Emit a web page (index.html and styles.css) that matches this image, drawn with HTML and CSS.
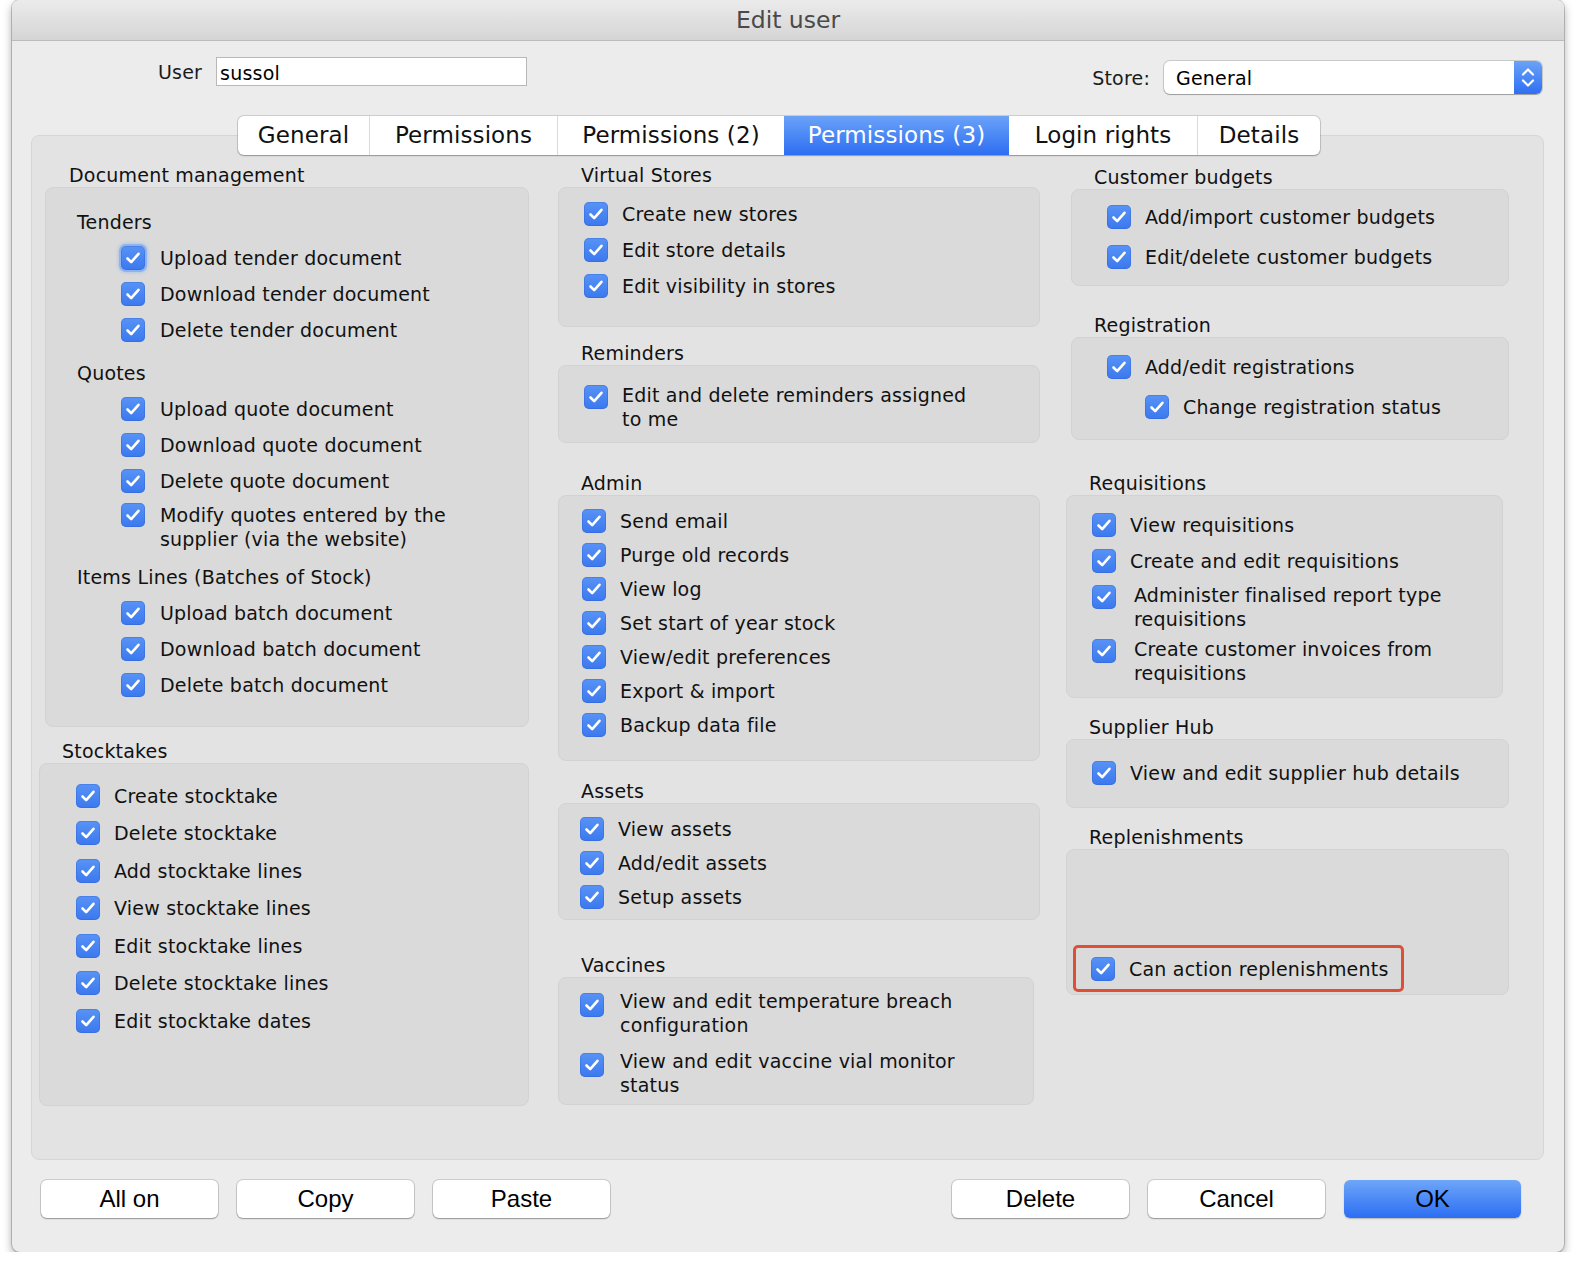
FILE: index.html
```html
<!DOCTYPE html>
<html>
<head>
<meta charset="utf-8">
<title>Edit user</title>
<link rel="stylesheet" href="styles.css">
</head>
<body>
<div class="window">
  <div class="titlebar">Edit user</div>
  <div class="toprow">
    <div class="field">
      <span class="flabel">User</span>
      <div class="input">sussol</div>
    </div>
    <div class="field store">
      <span class="flabel">Store:</span>
      <div class="select">
        <span class="seltext">General</span>
        <span class="selbtn">
          <svg width="28" height="33" viewBox="0 0 28 33"><path d="M9 13.5 L14 8.5 L19 13.5 M9 19.5 L14 24.5 L19 19.5" fill="none" stroke="#fff" stroke-width="2.2" stroke-linecap="round" stroke-linejoin="round"/></svg>
        </span>
      </div>
    </div>
  </div>

  <div class="panel">
    <div class="tabs">
      <div class="tab t1">General</div>
      <div class="tab t2">Permissions</div>
      <div class="tab t3">Permissions (2)</div>
      <div class="tab t4 active">Permissions (3)</div>
      <div class="tab t5">Login rights</div>
      <div class="tab t6">Details</div>
    </div>

    <div class="cols">
      <!-- Column 1 -->
      <div class="col">
        <div class="group g-doc">
          <div class="glabel">Document management</div>
          <div class="gbox">
            <div class="sub">Tenders</div>
            <div class="row"><span class="cb focus"><svg viewBox="0 0 24 24"><path d="M6.5 12.5 L10.2 16.2 L17.5 7.8"/></svg></span><span class="txt">Upload tender document</span></div>
            <div class="row"><span class="cb"><svg viewBox="0 0 24 24"><path d="M6.5 12.5 L10.2 16.2 L17.5 7.8"/></svg></span><span class="txt">Download tender document</span></div>
            <div class="row"><span class="cb"><svg viewBox="0 0 24 24"><path d="M6.5 12.5 L10.2 16.2 L17.5 7.8"/></svg></span><span class="txt">Delete tender document</span></div>
            <div class="sub sub-q">Quotes</div>
            <div class="row"><span class="cb"><svg viewBox="0 0 24 24"><path d="M6.5 12.5 L10.2 16.2 L17.5 7.8"/></svg></span><span class="txt">Upload quote document</span></div>
            <div class="row"><span class="cb"><svg viewBox="0 0 24 24"><path d="M6.5 12.5 L10.2 16.2 L17.5 7.8"/></svg></span><span class="txt">Download quote document</span></div>
            <div class="row"><span class="cb"><svg viewBox="0 0 24 24"><path d="M6.5 12.5 L10.2 16.2 L17.5 7.8"/></svg></span><span class="txt">Delete quote document</span></div>
            <div class="row multi doc-multi"><span class="cb"><svg viewBox="0 0 24 24"><path d="M6.5 12.5 L10.2 16.2 L17.5 7.8"/></svg></span><span class="txt">Modify quotes entered by the<br>supplier (via the website)</span></div>
            <div class="sub sub-i">Items Lines (Batches of Stock)</div>
            <div class="row"><span class="cb"><svg viewBox="0 0 24 24"><path d="M6.5 12.5 L10.2 16.2 L17.5 7.8"/></svg></span><span class="txt">Upload batch document</span></div>
            <div class="row"><span class="cb"><svg viewBox="0 0 24 24"><path d="M6.5 12.5 L10.2 16.2 L17.5 7.8"/></svg></span><span class="txt">Download batch document</span></div>
            <div class="row"><span class="cb"><svg viewBox="0 0 24 24"><path d="M6.5 12.5 L10.2 16.2 L17.5 7.8"/></svg></span><span class="txt">Delete batch document</span></div>
          </div>
        </div>

        <div class="group g-stock">
          <div class="glabel">Stocktakes</div>
          <div class="gbox">
            <div class="row"><span class="cb"><svg viewBox="0 0 24 24"><path d="M6.5 12.5 L10.2 16.2 L17.5 7.8"/></svg></span><span class="txt">Create stocktake</span></div>
            <div class="row"><span class="cb"><svg viewBox="0 0 24 24"><path d="M6.5 12.5 L10.2 16.2 L17.5 7.8"/></svg></span><span class="txt">Delete stocktake</span></div>
            <div class="row"><span class="cb"><svg viewBox="0 0 24 24"><path d="M6.5 12.5 L10.2 16.2 L17.5 7.8"/></svg></span><span class="txt">Add stocktake lines</span></div>
            <div class="row"><span class="cb"><svg viewBox="0 0 24 24"><path d="M6.5 12.5 L10.2 16.2 L17.5 7.8"/></svg></span><span class="txt">View stocktake lines</span></div>
            <div class="row"><span class="cb"><svg viewBox="0 0 24 24"><path d="M6.5 12.5 L10.2 16.2 L17.5 7.8"/></svg></span><span class="txt">Edit stocktake lines</span></div>
            <div class="row"><span class="cb"><svg viewBox="0 0 24 24"><path d="M6.5 12.5 L10.2 16.2 L17.5 7.8"/></svg></span><span class="txt">Delete stocktake lines</span></div>
            <div class="row"><span class="cb"><svg viewBox="0 0 24 24"><path d="M6.5 12.5 L10.2 16.2 L17.5 7.8"/></svg></span><span class="txt">Edit stocktake dates</span></div>
          </div>
        </div>
      </div>

      <!-- Column 2 -->
      <div class="col col-mid">
        <div class="group g-virt">
          <div class="glabel">Virtual Stores</div>
          <div class="gbox">
            <div class="row"><span class="cb"><svg viewBox="0 0 24 24"><path d="M6.5 12.5 L10.2 16.2 L17.5 7.8"/></svg></span><span class="txt">Create new stores</span></div>
            <div class="row"><span class="cb"><svg viewBox="0 0 24 24"><path d="M6.5 12.5 L10.2 16.2 L17.5 7.8"/></svg></span><span class="txt">Edit store details</span></div>
            <div class="row"><span class="cb"><svg viewBox="0 0 24 24"><path d="M6.5 12.5 L10.2 16.2 L17.5 7.8"/></svg></span><span class="txt">Edit visibility in stores</span></div>
          </div>
        </div>

        <div class="group g-rem">
          <div class="glabel">Reminders</div>
          <div class="gbox">
            <div class="row multi"><span class="cb"><svg viewBox="0 0 24 24"><path d="M6.5 12.5 L10.2 16.2 L17.5 7.8"/></svg></span><span class="txt">Edit and delete reminders assigned<br>to me</span></div>
          </div>
        </div>

        <div class="group g-admin">
          <div class="glabel">Admin</div>
          <div class="gbox">
            <div class="row"><span class="cb"><svg viewBox="0 0 24 24"><path d="M6.5 12.5 L10.2 16.2 L17.5 7.8"/></svg></span><span class="txt">Send email</span></div>
            <div class="row"><span class="cb"><svg viewBox="0 0 24 24"><path d="M6.5 12.5 L10.2 16.2 L17.5 7.8"/></svg></span><span class="txt">Purge old records</span></div>
            <div class="row"><span class="cb"><svg viewBox="0 0 24 24"><path d="M6.5 12.5 L10.2 16.2 L17.5 7.8"/></svg></span><span class="txt">View log</span></div>
            <div class="row"><span class="cb"><svg viewBox="0 0 24 24"><path d="M6.5 12.5 L10.2 16.2 L17.5 7.8"/></svg></span><span class="txt">Set start of year stock</span></div>
            <div class="row"><span class="cb"><svg viewBox="0 0 24 24"><path d="M6.5 12.5 L10.2 16.2 L17.5 7.8"/></svg></span><span class="txt">View/edit preferences</span></div>
            <div class="row"><span class="cb"><svg viewBox="0 0 24 24"><path d="M6.5 12.5 L10.2 16.2 L17.5 7.8"/></svg></span><span class="txt">Export &amp; import</span></div>
            <div class="row"><span class="cb"><svg viewBox="0 0 24 24"><path d="M6.5 12.5 L10.2 16.2 L17.5 7.8"/></svg></span><span class="txt">Backup data file</span></div>
          </div>
        </div>

        <div class="group g-assets">
          <div class="glabel">Assets</div>
          <div class="gbox">
            <div class="row"><span class="cb"><svg viewBox="0 0 24 24"><path d="M6.5 12.5 L10.2 16.2 L17.5 7.8"/></svg></span><span class="txt">View assets</span></div>
            <div class="row"><span class="cb"><svg viewBox="0 0 24 24"><path d="M6.5 12.5 L10.2 16.2 L17.5 7.8"/></svg></span><span class="txt">Add/edit assets</span></div>
            <div class="row"><span class="cb"><svg viewBox="0 0 24 24"><path d="M6.5 12.5 L10.2 16.2 L17.5 7.8"/></svg></span><span class="txt">Setup assets</span></div>
          </div>
        </div>

        <div class="group g-vacc">
          <div class="glabel">Vaccines</div>
          <div class="gbox">
            <div class="row multi"><span class="cb"><svg viewBox="0 0 24 24"><path d="M6.5 12.5 L10.2 16.2 L17.5 7.8"/></svg></span><span class="txt">View and edit temperature breach<br>configuration</span></div>
            <div class="row multi"><span class="cb"><svg viewBox="0 0 24 24"><path d="M6.5 12.5 L10.2 16.2 L17.5 7.8"/></svg></span><span class="txt">View and edit vaccine vial monitor<br>status</span></div>
          </div>
        </div>
      </div>

      <!-- Column 3 -->
      <div class="col col-right">
        <div class="group g-cust">
          <div class="glabel">Customer budgets</div>
          <div class="gbox">
            <div class="row"><span class="cb"><svg viewBox="0 0 24 24"><path d="M6.5 12.5 L10.2 16.2 L17.5 7.8"/></svg></span><span class="txt">Add/import customer budgets</span></div>
            <div class="row"><span class="cb"><svg viewBox="0 0 24 24"><path d="M6.5 12.5 L10.2 16.2 L17.5 7.8"/></svg></span><span class="txt">Edit/delete customer budgets</span></div>
          </div>
        </div>

        <div class="group g-reg">
          <div class="glabel">Registration</div>
          <div class="gbox">
            <div class="row"><span class="cb"><svg viewBox="0 0 24 24"><path d="M6.5 12.5 L10.2 16.2 L17.5 7.8"/></svg></span><span class="txt">Add/edit registrations</span></div>
            <div class="row indent"><span class="cb"><svg viewBox="0 0 24 24"><path d="M6.5 12.5 L10.2 16.2 L17.5 7.8"/></svg></span><span class="txt">Change registration status</span></div>
          </div>
        </div>

        <div class="group g-req">
          <div class="glabel">Requisitions</div>
          <div class="gbox">
            <div class="row"><span class="cb"><svg viewBox="0 0 24 24"><path d="M6.5 12.5 L10.2 16.2 L17.5 7.8"/></svg></span><span class="txt">View requisitions</span></div>
            <div class="row"><span class="cb"><svg viewBox="0 0 24 24"><path d="M6.5 12.5 L10.2 16.2 L17.5 7.8"/></svg></span><span class="txt">Create and edit requisitions</span></div>
            <div class="row multi req-a"><span class="cb"><svg viewBox="0 0 24 24"><path d="M6.5 12.5 L10.2 16.2 L17.5 7.8"/></svg></span><span class="txt">Administer finalised report type<br>requisitions</span></div>
            <div class="row multi req-b"><span class="cb"><svg viewBox="0 0 24 24"><path d="M6.5 12.5 L10.2 16.2 L17.5 7.8"/></svg></span><span class="txt">Create customer invoices from<br>requisitions</span></div>
          </div>
        </div>

        <div class="group g-sup">
          <div class="glabel">Supplier Hub</div>
          <div class="gbox">
            <div class="row"><span class="cb"><svg viewBox="0 0 24 24"><path d="M6.5 12.5 L10.2 16.2 L17.5 7.8"/></svg></span><span class="txt">View and edit supplier hub details</span></div>
          </div>
        </div>

        <div class="group g-rep">
          <div class="glabel">Replenishments</div>
          <div class="gbox">
            <div class="highlight">
              <div class="row"><span class="cb"><svg viewBox="0 0 24 24"><path d="M6.5 12.5 L10.2 16.2 L17.5 7.8"/></svg></span><span class="txt">Can action replenishments</span></div>
            </div>
          </div>
        </div>
      </div>
    </div>
  </div>

  <div class="buttons">
    <div class="btn">All on</div>
    <div class="btn">Copy</div>
    <div class="btn">Paste</div>
    <div class="spacer"></div>
    <div class="btn">Delete</div>
    <div class="btn">Cancel</div>
    <div class="btn primary">OK</div>
  </div>
</div>
</body>
</html>
```

FILE: styles.css
```css
html, body {
  margin: 0;
  padding: 0;
  background: #ffffff;
}

body {
  font-family: "DejaVu Sans", "Noto Sans", sans-serif;
  font-size: 19px;
  letter-spacing: 0.2px;
  color: #111;
}

.window {
  margin-left: 12px;
  width: 1552px;
  height: 1252px;
  box-sizing: border-box;
  background: #ececec;
  border-radius: 8px;
  box-shadow: 0 0 0 1px rgba(0,0,0,0.18), 0 4px 10px rgba(0,0,0,0.35);
  overflow: hidden;
}

.titlebar {
  height: 41px;
  box-sizing: border-box;
  border-bottom: 1px solid #bcbcbc;
  background: linear-gradient(#ebebeb, #d5d5d5);
  text-align: center;
  line-height: 41px;
  font-size: 23.5px;
  letter-spacing: 0;
  color: #4a4a4a;
}

.toprow {
  height: 94px;
  box-sizing: border-box;
  padding: 16px 22px 0 146px;
  display: flex;
  align-items: flex-start;
}

.field {
  display: flex;
  align-items: center;
}

.flabel {
  margin-right: 14px;
  color: #1b1b1b;
}

.input {
  width: 311px;
  height: 29px;
  box-sizing: border-box;
  background: #fff;
  border: 1px solid #b8b8b8;
  line-height: 27px;
  padding: 2px 0 0 3px;
  color: #000;
}

.field.store {
  margin-left: auto;
  margin-top: 4px;
}

.select {
  width: 378px;
  height: 33px;
  box-sizing: border-box;
  background: #fff;
  border-radius: 6px;
  box-shadow: 0 0 0 1px rgba(0,0,0,0.14), 0 1px 1px rgba(0,0,0,0.22);
  display: flex;
  align-items: center;
  overflow: hidden;
}

.seltext {
  flex: 1;
  padding-left: 12px;
  color: #000;
}

.selbtn {
  width: 28px;
  height: 33px;
  background: linear-gradient(#6aa3f8, #2e6ff3);
  display: flex;
}

.panel {
  margin: 0 20px 0 19px;
  height: 1025px;
  box-sizing: border-box;
  background: #e3e3e3;
  border: 1px solid #d6d6d6;
  border-radius: 8px;
}

.tabs {
  margin: -20px 0 0 206px;
  display: flex;
  width: max-content;
  height: 39px;
  background: #fff;
  border-radius: 6px;
  box-shadow: 0 0 0 1px rgba(0,0,0,0.13), 0 1px 1.5px rgba(0,0,0,0.25);
  overflow: hidden;
  position: relative;
}

.tab {
  font-size: 23px;
  letter-spacing: 0.1px;
  line-height: 39px;
  text-align: center;
  color: #111;
  border-left: 1px solid #dadada;
  box-sizing: border-box;
  white-space: nowrap;
}

.tab.t1 { width: 131px; border-left: none; }
.tab.t2 { width: 188px; }
.tab.t3 { width: 227px; }
.tab.t4 { width: 225px; }
.tab.t5 { width: 188px; }
.tab.t6 { width: 123px; }

.tab.active {
  background: linear-gradient(#6aa2f8, #2d6ef2);
  color: #fff;
  border-left: none;
}

.tab.active + .tab {
  border-left: none;
}

.cols {
  display: grid;
  grid-template-columns: 490px 511px 469px;
  padding-left: 7px;
  margin-top: 8px;
  align-items: start;
}

.col {
  display: flex;
  flex-direction: column;
}

.col.col-mid { padding-left: 29px; }
.col.col-right { padding-left: 26px; }

.glabel {
  height: 24px;
  line-height: 24px;
  padding-left: 23px;
  color: #111;
  white-space: nowrap;
}

.gbox {
  background: #dadada;
  border: 1px solid #d2d2d2;
  border-radius: 8px;
  box-sizing: border-box;
}

.row {
  display: flex;
  align-items: center;
  height: 36px;
  white-space: nowrap;
}

.row.multi {
  height: auto;
  align-items: flex-start;
}

.txt {
  line-height: 24px;
  color: #111;
}

.cb {
  flex: none;
  width: 24px;
  height: 24px;
  border-radius: 5px;
  background: linear-gradient(#5893f6, #3b78ee);
  box-shadow: inset 0 0 0 1px rgba(40,90,200,0.3);
  display: flex;
}

.cb svg {
  width: 24px;
  height: 24px;
}

.cb svg path {
  fill: none;
  stroke: #fff;
  stroke-width: 2.6;
  stroke-linecap: round;
  stroke-linejoin: round;
}

.cb.focus {
  box-shadow: inset 0 0 0 1px rgba(40,90,200,0.3), 0 0 0 2px rgba(110,160,245,0.55), 0 0 3px 3px rgba(110,160,245,0.35);
}

.sub {
  height: 36px;
  line-height: 36px;
  padding-left: 31px;
  color: #111;
}

/* Document management */
.g-doc { margin-left: 6px; width: 484px; }
.g-doc .glabel { padding-left: 24px; }
.g-doc .gbox { padding: 16px 0 23px; }
.g-doc .row { padding-left: 75px; }
.g-doc .row .txt { margin-left: 15px; }
.g-doc .sub-q { margin-top: 7px; }
.g-doc .sub-i { margin-top: 5px; }
.g-doc .doc-multi { padding-top: 4px; padding-bottom: 3px; }

/* Stocktakes */
.g-stock { margin-top: 12px; width: 490px; }
.g-stock .gbox { padding: 13px 0 65px; }
.g-stock .row { padding-left: 36px; height: 37.5px; }
.g-stock .row .txt { margin-left: 14px; }

/* Virtual Stores */
.g-virt .gbox { padding: 8px 0 22px; }
.g-virt .row { padding-left: 25px; }
.g-virt .row .txt { margin-left: 14px; }

/* Reminders */
.g-rem { margin-top: 14px; }
.g-rem .gbox { padding: 17px 0 11px; }
.g-rem .row { padding-left: 25px; }
.g-rem .row .cb { margin-top: 2px; }
.g-rem .row .txt { margin-left: 14px; }

/* Admin */
.g-admin { margin-top: 28px; }
.g-admin .gbox { padding: 8px 0 18px; }
.g-admin .row { padding-left: 23px; height: 34px; }
.g-admin .row .txt { margin-left: 14px; }

/* Assets */
.g-assets { margin-top: 18px; }
.g-assets .gbox { padding: 8px 0 5px; }
.g-assets .row { padding-left: 21px; height: 34px; }
.g-assets .row .txt { margin-left: 14px; }

/* Vaccines */
.g-vacc { margin-top: 33px; width: 476px; }
.g-vacc .gbox { padding: 11px 0 7px; display: flex; flex-direction: column; gap: 12px; }
.g-vacc .row { padding-left: 21px; }
.g-vacc .row .cb { margin-top: 4px; }
.g-vacc .row .txt { margin-left: 16px; }

/* Customer budgets */
.g-cust { margin-top: 2px; margin-left: 5px; width: 438px; }
.g-cust .gbox { padding: 7px 0 8px; }
.g-cust .row { padding-left: 35px; height: 40px; }
.g-cust .row .txt { margin-left: 14px; }

/* Registration */
.g-reg { margin-top: 27px; margin-left: 5px; width: 438px; }
.g-reg .gbox { padding: 9px 0 12px; }
.g-reg .row { padding-left: 35px; height: 40px; }
.g-reg .row.indent { padding-left: 73px; }
.g-reg .row .txt { margin-left: 14px; }

/* Requisitions */
.g-req { margin-top: 31px; width: 437px; }
.g-req .gbox { padding: 11px 0 12px; }
.g-req .row { padding-left: 25px; }
.g-req .row .txt { margin-left: 14px; }
.g-req .row.multi .txt { margin-left: 18px; }
.g-req .row.multi .cb { margin-top: 2px; }
.g-req .req-a { margin-top: 4px; }
.g-req .req-b { margin-top: 6px; }

/* Supplier Hub */
.g-sup { margin-top: 17px; }
.g-sup .gbox { padding: 15px 0 16px; }
.g-sup .row { padding-left: 25px; }
.g-sup .row .txt { margin-left: 14px; }

/* Replenishments */
.g-rep { margin-top: 17px; }
.g-rep .gbox { padding: 95px 0 2px 6px; }
.highlight {
  width: max-content;
  border: 3px solid #df4f36;
  border-radius: 5px;
  padding: 0 13px 0 15px;
}
.g-rep .row { height: 41px; }
.g-rep .row .txt { margin-left: 14px; }

/* Buttons */
.buttons {
  display: flex;
  gap: 19px;
  margin-top: 20px;
  padding: 0 43px 0 29px;
}

.spacer {
  flex: 1;
}

.btn {
  width: 177px;
  height: 38px;
  box-sizing: border-box;
  background: #fff;
  border-radius: 6px;
  box-shadow: 0 0 0 1px rgba(0,0,0,0.13), 0 1px 1.5px rgba(0,0,0,0.28);
  font-family: "Liberation Sans", Arial, sans-serif;
  font-size: 24px;
  letter-spacing: 0;
  line-height: 38px;
  text-align: center;
  color: #000;
}

.btn.primary {
  background: linear-gradient(#6ea6f8, #2c6ef4);
  box-shadow: 0 1px 1.5px rgba(0,0,0,0.22);
}
```
